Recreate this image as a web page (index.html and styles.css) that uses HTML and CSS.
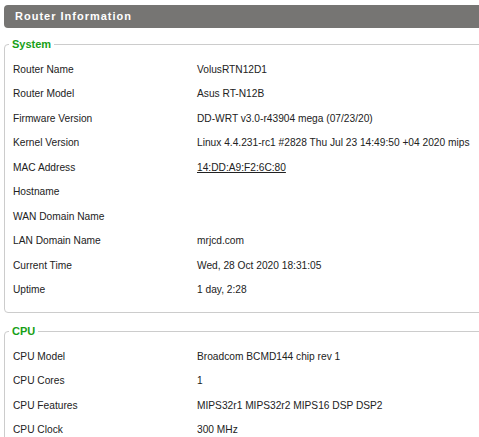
FILE: index.html
```html
<!DOCTYPE html>
<html>
<head>
<meta charset="utf-8">
<link rel="stylesheet" href="styles.css">
</head>
<body>
<div class="page">
  <h2 class="title">Router Information</h2>
  <fieldset class="group">
    <legend class="legend">System</legend>
    <div class="row"><span class="label">Router Name</span><span class="value">VolusRTN12D1</span></div>
    <div class="row"><span class="label">Router Model</span><span class="value">Asus RT-N12B</span></div>
    <div class="row"><span class="label">Firmware Version</span><span class="value">DD-WRT v3.0-r43904 mega (07/23/20)</span></div>
    <div class="row"><span class="label">Kernel Version</span><span class="value">Linux 4.4.231-rc1 #2828 Thu Jul 23 14:49:50 +04 2020 mips</span></div>
    <div class="row"><span class="label">MAC Address</span><span class="value"><a class="link" href="#">14:DD:A9:F2:6C:80</a></span></div>
    <div class="row"><span class="label">Hostname</span><span class="value"></span></div>
    <div class="row"><span class="label">WAN Domain Name</span><span class="value"></span></div>
    <div class="row"><span class="label">LAN Domain Name</span><span class="value">mrjcd.com</span></div>
    <div class="row"><span class="label">Current Time</span><span class="value">Wed, 28 Oct 2020 18:31:05</span></div>
    <div class="row"><span class="label">Uptime</span><span class="value">1 day, 2:28</span></div>
  </fieldset>
  <fieldset class="group">
    <legend class="legend">CPU</legend>
    <div class="row"><span class="label">CPU Model</span><span class="value">Broadcom BCMD144 chip rev 1</span></div>
    <div class="row"><span class="label">CPU Cores</span><span class="value">1</span></div>
    <div class="row"><span class="label">CPU Features</span><span class="value">MIPS32r1 MIPS32r2 MIPS16 DSP DSP2</span></div>
    <div class="row"><span class="label">CPU Clock</span><span class="value">300 MHz</span></div>
  </fieldset>
</div>
</body>
</html>
```
FILE: styles.css
```css
html, body {
  margin: 0;
  padding: 0;
  overflow: hidden;
  background: #fff;
}
body {
  font-family: "Liberation Sans", Arial, sans-serif;
  font-size: 10.2px;
  color: #222;
}
.page {
  width: 520px;
  padding: 5px 0 0 4px;
}
.title {
  margin: 0 0 10px 0;
  height: 23px;
  line-height: 23px;
  padding-left: 11px;
  background: #767573;
  color: #fff;
  font-size: 11px;
  font-weight: bold;
  letter-spacing: 1px;
  border-radius: 4px 0 0 4px;
}
.group {
  margin: 0 0 12px 0;
  padding: 6px 0 10px 8px;
  border: 1px solid #cccccc;
  border-radius: 4px;
}
.legend {
  margin-left: -4px;
  padding: 0 3px;
  font-weight: bold;
  font-size: 11px;
  line-height: 13px;
  color: #17a017;
}
.row {
  display: flex;
  height: 24.5px;
  align-items: center;
}
.label {
  width: 184px;
  flex: none;
}
.value {
  flex: 1;
}
.link {
  color: #222;
  text-decoration: underline;
}
```
